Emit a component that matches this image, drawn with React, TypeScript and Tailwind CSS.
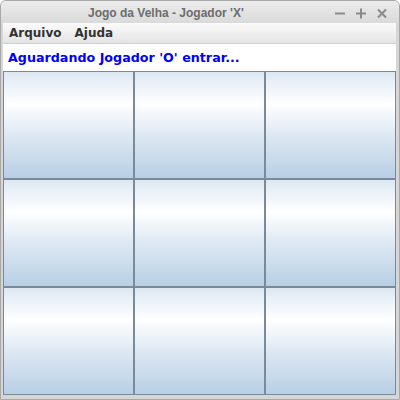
const cells = Array.from({ length: 9 }, (_, i) => i)

const TitleIcon = ({ kind }: { kind: 'min' | 'max' | 'close' }) => (
  <svg width="12" height="12" viewBox="0 0 12 12" className="block">
    {kind === 'min' && <path d="M1 6.5h10" stroke="#8a8a8a" strokeWidth="2" />}
    {kind === 'max' && <path d="M1 6.5h10M6 1.5v10" stroke="#8a8a8a" strokeWidth="2" />}
    {kind === 'close' && <path d="M2 2.5l8 8M10 2.5l-8 8" stroke="#8a8a8a" strokeWidth="2" />}
  </svg>
)

export default function App() {
  return (
    <div className="w-[400px] h-[400px] bg-[#d6d6d6] border border-[#a8a8a8] rounded-t-[6px] flex flex-col overflow-hidden">
      {/* title bar */}
      <div className="h-[22px] shrink-0 flex items-center bg-[linear-gradient(to_bottom,#ececec,#dadada)]">
        <div className="pl-[87px] flex-1 font-['Liberation_Sans',Arial,sans-serif] font-bold text-[12px] text-[#6c6c6c] leading-none pt-[1px]">
          Jogo da Velha - Jogador 'X'
        </div>
        <div className="flex items-center gap-[9px] pr-[11px] pt-[2px]">
          <TitleIcon kind="min" />
          <TitleIcon kind="max" />
          <TitleIcon kind="close" />
        </div>
      </div>

      <div className="flex-1 ml-[2px] mr-[3px] mb-[4px] flex flex-col">
        {/* menu bar */}
        <div className="h-[21px] shrink-0 flex items-center gap-[13px] pl-[6px] bg-[linear-gradient(to_bottom,#fbfbfb,#e4e4e4)] border-b border-[#cfcfcf] font-['DejaVu_Sans',sans-serif] font-bold text-[12px] text-[#333333]">
          <span>Arquivo</span>
          <span>Ajuda</span>
        </div>

        {/* status */}
        <div className="h-[27px] shrink-0 flex items-center pl-[5px] bg-white font-['DejaVu_Sans',sans-serif] font-bold text-[12.7px] text-[#0000ff]">
          Aguardando Jogador 'O' entrar...
        </div>

        {/* board */}
        <div className="grid grid-cols-3 grid-rows-3 w-[393px] h-[324px]">
          {cells.map((i) => (
            <div
              key={i}
              className="border border-[#7a8a99] bg-[linear-gradient(to_bottom,#dde8f3_0%,#ffffff_30%,#dde8f3_60%,#b8cfe5_100%)]"
            />
          ))}
        </div>
      </div>
    </div>
  )
}
